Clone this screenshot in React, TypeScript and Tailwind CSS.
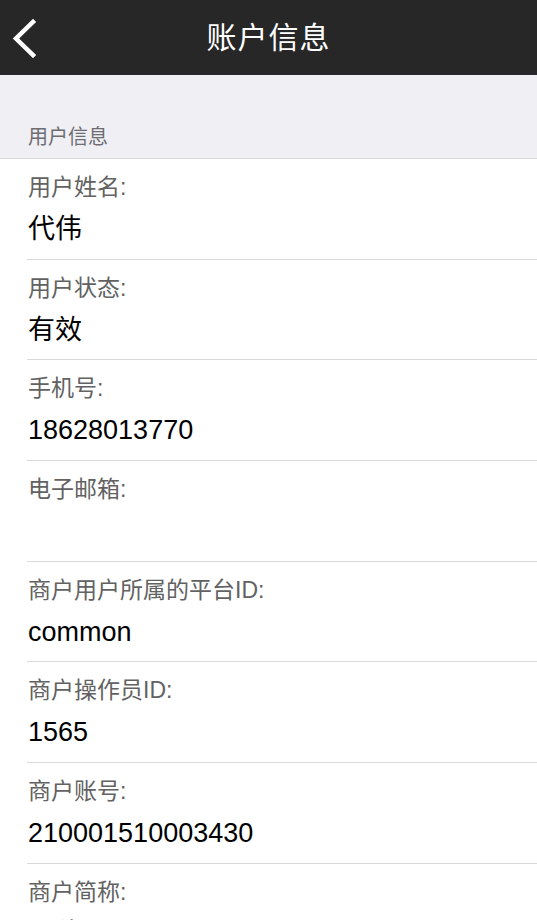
const rows = [
  { label: "用户姓名:", value: "代伟" },
  { label: "用户状态:", value: "有效" },
  { label: "手机号:", value: "18628013770" },
  { label: "电子邮箱:", value: "" },
  { label: "商户用户所属的平台ID:", value: "common" },
  { label: "商户操作员ID:", value: "1565" },
  { label: "商户账号:", value: "210001510003430" },
  { label: "商户简称:", value: "代伟" },
];

const font = "font-['Liberation_Sans','Noto_Sans_CJK_SC',sans-serif]";

export default function App() {
  return (
    <div className={`w-[537px] h-[920px] overflow-hidden bg-white ${font}`}>
      <header className="relative h-[75px] bg-[#272727] flex items-center justify-center">
        <button className="absolute left-0 top-0 h-[75px] w-[50px] flex items-center justify-center">
          <svg width="50" height="75" viewBox="0 0 50 75">
            <polyline
              points="33,22 16,38.5 33,55"
              fill="none"
              stroke="white"
              strokeWidth="4.5"
              strokeLinecap="square"
              strokeLinejoin="miter"
            />
          </svg>
        </button>
        <h1 className="text-[30px] leading-[36px] text-white tracking-[1px]">账户信息</h1>
      </header>

      <div className="h-[84px] bg-[#efeff4] border-b border-[#d8d8dc] flex items-end px-[28px] pb-[8px]">
        <p className="text-[20px] leading-[26px] text-[#6d6d72]">用户信息</p>
      </div>

      <div className="pl-[27px]">
        {rows.map((r) => (
          <div
            key={r.label}
            className="h-[100.67px] border-b border-[#d9d9d9] pt-[13px] pl-[1px]"
          >
            <p className="text-[23px] leading-[30px] text-[#626262]">{r.label}</p>
            <p className="mt-[9px] text-[27px] leading-[36px] text-black">{r.value}</p>
          </div>
        ))}
      </div>
    </div>
  );
}
